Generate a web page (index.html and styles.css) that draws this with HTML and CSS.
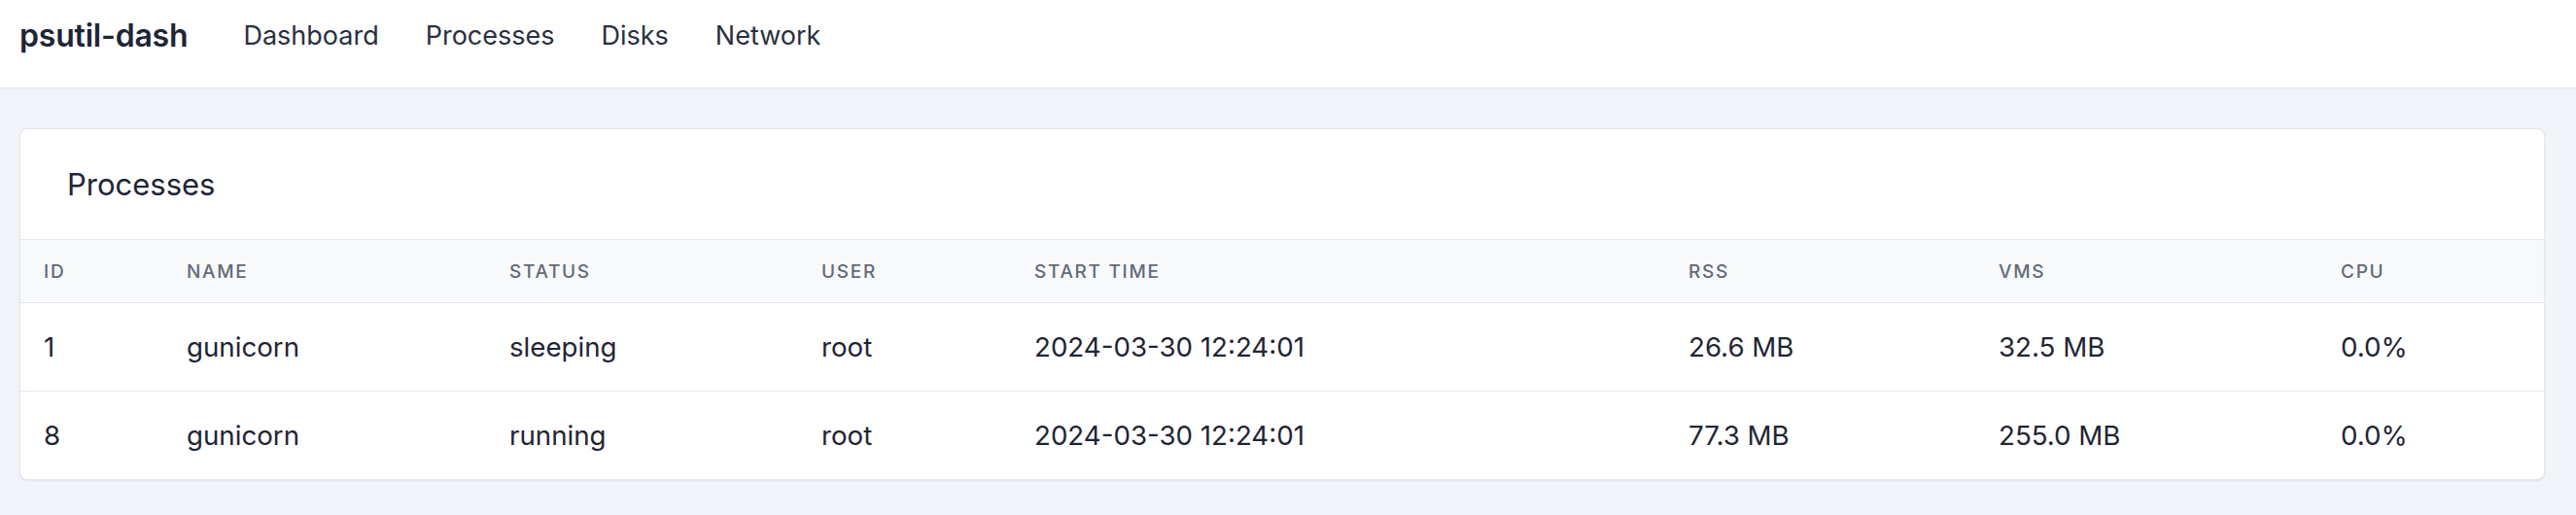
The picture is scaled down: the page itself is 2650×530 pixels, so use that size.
FILE: index.html
```html
<!DOCTYPE html>
<html lang="en">
<head>
<meta charset="utf-8">
<title>psutil-dash</title>
<link rel="stylesheet" href="styles.css">
</head>
<body>
<header class="navbar">
  <a class="brand" href="#">psutil-dash</a>
  <nav class="nav">
    <a class="nav-link" href="#">Dashboard</a>
    <a class="nav-link" href="#">Processes</a>
    <a class="nav-link" href="#">Disks</a>
    <a class="nav-link" href="#">Network</a>
  </nav>
</header>
<main class="main">
  <section class="card">
    <h2 class="card-title">Processes</h2>
    <table class="table">
      <colgroup>
        <col class="c-id"><col class="c-name"><col class="c-status"><col class="c-user">
        <col class="c-start"><col class="c-rss"><col class="c-vms"><col class="c-cpu">
      </colgroup>
      <thead>
        <tr><th>ID</th><th>Name</th><th>Status</th><th>User</th><th>Start Time</th><th>RSS</th><th>VMS</th><th>CPU</th></tr>
      </thead>
      <tbody>
        <tr><td>1</td><td>gunicorn</td><td>sleeping</td><td>root</td><td>2024-03-30 12:24:01</td><td>26.6 MB</td><td>32.5 MB</td><td>0.0%</td></tr>
        <tr><td>8</td><td>gunicorn</td><td>running</td><td>root</td><td>2024-03-30 12:24:01</td><td>77.3 MB</td><td>255.0 MB</td><td>0.0%</td></tr>
      </tbody>
    </table>
  </section>
</main>
</body>
</html>
```

FILE: styles.css
```css
* { box-sizing: border-box; }
html, body { margin: 0; padding: 0; }
body {
  font-family: Inter, "Noto Sans", "Liberation Sans", sans-serif;
  background: #f1f4f9;
  color: #1f2533;
  min-height: 530px;
}
a { color: inherit; text-decoration: none; }

.navbar {
  height: 91px;
  background: #ffffff;
  border-bottom: 1px solid #e3e6ea;
  display: flex;
  align-items: flex-start;
  padding: 19px 0 0 20px;
}
.brand {
  font-size: 32px;
  font-weight: 600;
  line-height: 36px;
  letter-spacing: -0.2px;
  color: #1e2536;
}
.nav {
  display: flex;
  gap: 48px;
  margin-left: 57px;
}
.nav-link {
  font-size: 27px;
  line-height: 36px;
  color: #2a3040;
}

.main {
  padding: 41px 32px 0 20px;
}
.card {
  background: #ffffff;
  border: 1px solid #e4e6ea;
  border-radius: 8px;
  box-shadow: 0 1px 2px rgba(0, 0, 0, 0.08);
  overflow: hidden;
}
.card-title {
  margin: 0;
  padding: 39px 48px 38px;
  font-size: 31px;
  line-height: 36px;
  font-weight: 400;
  color: #1e2536;
}

.table {
  width: 100%;
  border-collapse: collapse;
  table-layout: fixed;
}
.c-id { width: 147px; }
.c-name { width: 332px; }
.c-status { width: 321px; }
.c-user { width: 219px; }
.c-start { width: 673px; }
.c-rss { width: 319px; }
.c-vms { width: 352px; }
.c-cpu { width: auto; }

.table th {
  text-align: left;
  background: #f8f9fb;
  border-top: 1px solid #e4e6ea;
  border-bottom: 1px solid #e4e6ea;
  padding: 21px 24px 19px;
  line-height: 24px;
  font-size: 19px;
  font-weight: 500;
  letter-spacing: 1.7px;
  text-transform: uppercase;
  color: #636a78;
}
.table td {
  padding: 25px 24px;
  line-height: 40px;
  font-size: 27.7px;
  color: #1f2533;
  border-bottom: 1px solid #e4e6ea;
}
.table tbody tr:last-child td { border-bottom: none; }
```
